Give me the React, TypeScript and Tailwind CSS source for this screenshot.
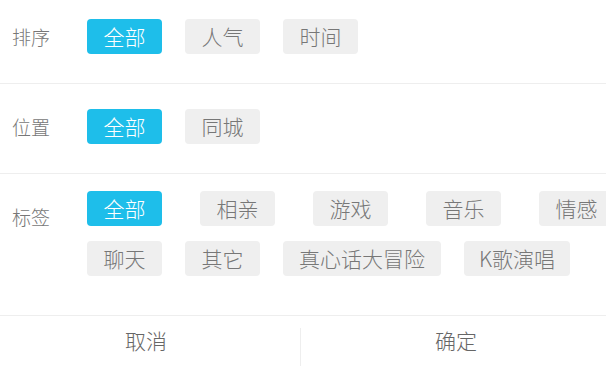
const font = { fontFamily: '"Noto Sans CJK SC", "Noto Sans", sans-serif' };

type ChipProps = { label: string; active?: boolean; width?: string };

const Chip = ({ label, active, width }: ChipProps) => (
  <div
    className={`${width ?? "w-[75px]"} h-[35px] shrink-0 rounded-[4px] flex items-center justify-center text-[21px] font-light leading-none ${
      active ? "bg-[#1ebeea] text-white" : "bg-[#efefef] text-[#777777]"
    }`}
  >
    {label}
  </div>
);

const Label = ({ children, className }: { children: string; className?: string }) => (
  <div className={`w-[87px] shrink-0 pl-[12px] text-[19px] font-light leading-[35px] text-[#777777] ${className ?? ""}`}>
    {children}
  </div>
);

export default function App() {
  return (
    <div className="w-[606px] h-[366px] overflow-hidden bg-white flex flex-col" style={font}>
      {/* 排序 */}
      <div className="h-[84px] shrink-0 flex items-start pt-[19px] border-b border-[#eeeeee]">
        <Label>排序</Label>
        <div className="flex gap-[23px]">
          <Chip label="全部" active />
          <Chip label="人气" />
          <Chip label="时间" />
        </div>
      </div>

      {/* 位置 */}
      <div className="h-[90px] shrink-0 flex items-start pt-[25px] border-b border-[#eeeeee]">
        <Label>位置</Label>
        <div className="flex gap-[23px]">
          <Chip label="全部" active />
          <Chip label="同城" />
        </div>
      </div>

      {/* 标签 */}
      <div className="h-[142px] shrink-0 flex items-start pt-[17px] border-b border-[#eeeeee]">
        <Label className="pt-[8px]">标签</Label>
        <div className="flex flex-col gap-[15px]">
          <div className="flex gap-[38px]">
            <Chip label="全部" active />
            <Chip label="相亲" />
            <Chip label="游戏" />
            <Chip label="音乐" />
            <Chip label="情感" />
          </div>
          <div className="flex gap-[23px]">
            <Chip label="聊天" />
            <Chip label="其它" />
            <Chip label="真心话大冒险" width="w-[158px]" />
            <Chip label="K歌演唱" width="w-[106px]" />
          </div>
        </div>
      </div>

      {/* 底部按钮 */}
      <div className="flex-1 flex">
        <button className="w-[300px] flex items-center justify-center text-[21px] font-light text-[#666666] pr-[8px]">取消</button>
        <div className="w-px bg-[#eeeeee] mt-[12px]" />
        <button className="flex-1 flex items-center justify-center text-[21px] font-light text-[#666666] pl-[5px]">确定</button>
      </div>
    </div>
  );
}
